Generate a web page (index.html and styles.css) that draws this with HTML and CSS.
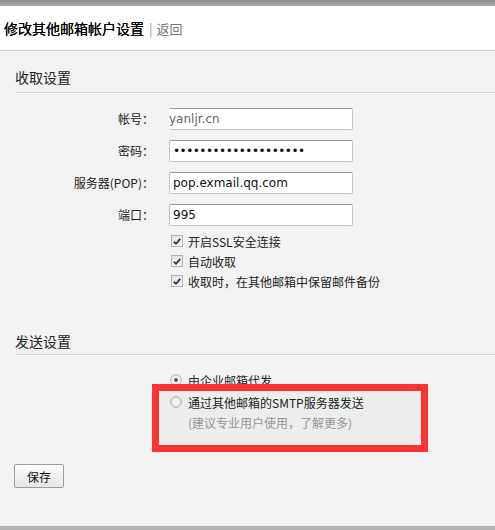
FILE: index.html
```html
<!DOCTYPE html>
<html lang="zh-CN">
<head>
<meta charset="utf-8">
<title>修改其他邮箱帐户设置</title>
<link rel="stylesheet" href="styles.css">
</head>
<body>
<div class="topbar"></div>
<div class="header">
  <span class="title">修改其他邮箱帐户设置</span><span class="sep">|</span><a class="back" href="#">返回</a>
</div>
<div class="main">
  <h2 class="sec-title">收取设置</h2>
  <div class="form">
    <label class="lbl">帐号：</label><input class="field cut" type="text" value="yanljr.cn">
    <label class="lbl">密码：</label><input class="field pw" type="password" value="12345678901234567890">
    <label class="lbl">服务器(POP)：</label><input class="field" type="text" value="pop.exmail.qq.com">
    <label class="lbl">端口：</label><input class="field" type="text" value="995">
  </div>
  <div class="options checks">
    <div class="opt"><span class="cb"><svg viewBox="0 0 11 11" width="11" height="11"><path d="M2 5.6 L4.4 8 L9 2.6" fill="none" stroke="#333" stroke-width="1.9"/></svg></span>开启SSL安全连接</div>
    <div class="opt"><span class="cb"><svg viewBox="0 0 11 11" width="11" height="11"><path d="M2 5.6 L4.4 8 L9 2.6" fill="none" stroke="#333" stroke-width="1.9"/></svg></span>自动收取</div>
    <div class="opt"><span class="cb"><svg viewBox="0 0 11 11" width="11" height="11"><path d="M2 5.6 L4.4 8 L9 2.6" fill="none" stroke="#333" stroke-width="1.9"/></svg></span>收取时，在其他邮箱中保留邮件备份</div>
  </div>
  <h2 class="sec-title sec2">发送设置</h2>
  <div class="options radios">
    <div class="opt ropt"><span class="radio on"></span>由企业邮箱代发</div>
    <div class="opt ropt"><span class="radio"></span>通过其他邮箱的SMTP服务器发送</div>
    <div class="hint">(建议专业用户使用，了解更多)</div>
    <div class="highlight"></div>
  </div>
  <button class="btn" type="button">保存</button>
</div>
<div class="footer"></div>
<div class="bottombar"></div>
</body>
</html>
```
FILE: styles.css
```css
html, body {
  margin: 0;
  padding: 0;
  overflow: hidden;
}
body {
  background: #f2f2f2;
  font-family: "Noto Sans CJK SC", "DejaVu Sans", sans-serif;
  font-size: 12px;
  color: #222;
}
.topbar {
  height: 6px;
  background: linear-gradient(#8a8a8a, #a8a8a8);
}
.header {
  height: 44px;
  background: #fff;
  border-bottom: 1px solid #c4c4c4;
  box-shadow: 0 1px 0 #fafafa;
  display: flex;
  align-items: center;
  padding-left: 4px;
}
.title {
  font-size: 14px;
  color: #000;
  text-shadow: 0 0 0.4px #000;
}
.sep {
  color: #999;
  font-size: 13px;
  margin: 0 4px 0 5px;
}
.back {
  color: #777;
  font-size: 13px;
  text-decoration: none;
}
.main {
  padding-left: 15px;
}
.sec-title {
  margin: 0;
  font-size: 14px;
  font-weight: normal;
  line-height: 20px;
  padding: 16px 0 5px;
  color: #222;
  border-bottom: 1px solid #d6d6d6;
  box-shadow: 0 1px 0 #fbfbfb;
}
.sec2 {
  padding: 40px 0 3px;
}
.form {
  display: grid;
  grid-template-columns: 139px 184px;
  column-gap: 15px;
  row-gap: 10px;
  margin-top: 15px;
}
.lbl {
  text-align: right;
  line-height: 22px;
  color: #222;
}
.field {
  box-sizing: border-box;
  width: 184px;
  height: 22px;
  margin: 0;
  border: 1px solid #c6c6c6;
  border-top-color: #9a9a9a;
  border-radius: 2px;
  background: #fff;
  padding: 0 3px;
  font-family: "DejaVu Sans", sans-serif;
  font-size: 12px;
  color: #111;
  outline: none;
}
.field.cut {
  border-left: 0;
  padding-left: 0;
  color: #666;
}
.field.pw {
  letter-spacing: -0.5px;
}
.options {
  margin-left: 154px;
}
.checks {
  margin-top: 5px;
}
.opt {
  display: flex;
  align-items: center;
  height: 20px;
  color: #222;
}
.cb {
  box-sizing: border-box;
  width: 12px;
  height: 12px;
  margin: 0 5px 0 2px;
  border: 1px solid #b4b4b4;
  background: linear-gradient(#e4e4e4, #f6f6f6);
  display: flex;
  align-items: center;
  justify-content: center;
}
.cb svg {
  display: block;
}
.radios {
  position: relative;
  margin-top: 14px;
}
.ropt {
  height: 22px;
}
.radio {
  box-sizing: border-box;
  width: 12px;
  height: 12px;
  margin: 0 6px 0 1px;
  border-radius: 50%;
  border: 1px solid #bcbcbc;
  background: radial-gradient(circle, #f4f4f4 0 45%, #dedede 70%);
  display: flex;
  align-items: center;
  justify-content: center;
}
.radio.on::after {
  content: "";
  width: 4px;
  height: 4px;
  border-radius: 50%;
  background: #555;
}
.hint {
  line-height: 20px;
  color: #9a9a9a;
  padding-left: 19px;
}
.highlight {
  position: absolute;
  left: -17px;
  top: 15px;
  width: 276px;
  height: 68px;
  box-sizing: border-box;
  border: 7px solid #fd3535;
  background: rgba(0, 60, 30, 0.025);
}
.btn {
  display: block;
  box-sizing: border-box;
  width: 50px;
  height: 24px;
  margin: 31px 0 0 -1px;
  padding: 0;
  border: 1px solid #9c9c9c;
  border-radius: 2px;
  background: linear-gradient(#fdfdfd, #e6e6e6);
  font-family: "Noto Sans CJK SC", sans-serif;
  font-size: 12px;
  color: #111;
}
.footer {
  margin-top: 33px;
  height: 4px;
  border-top: 1px solid #fbfbfb;
}
.bottombar {
  height: 5px;
  background: #b6b6b6;
}
```
